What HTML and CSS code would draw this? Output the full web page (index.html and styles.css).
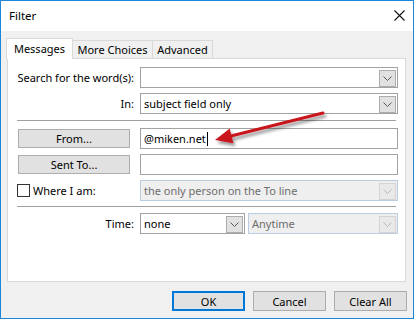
FILE: index.html
```html
<!DOCTYPE html>
<html lang="en">
<head>
  <meta charset="UTF-8" />
  <title>Filter</title>
  <link rel="stylesheet" href="styles.css">
</head>
<body>
  <div class="dialog">
    <div class="titlebar">
      <span class="title">Filter</span>
      <svg class="close" width="11" height="11" viewBox="0 0 11 11">
        <path d="M0.5 0.5 L10.5 10.5 M10.5 0.5 L0.5 10.5" stroke="#111" stroke-width="1.1" fill="none"/>
      </svg>
    </div>

    <div class="dialog-body">
      <div class="tabs">
        <div class="tab active tab-messages">Messages</div>
        <div class="tab tab-more">More Choices</div>
        <div class="tab tab-advanced">Advanced</div>
      </div>

      <div class="panel">
        <div class="row">
          <span class="label">Search for the word(s):</span>
          <div class="combo">
            <span class="combo-text"></span>
            <span class="drop"><svg width="9" height="5" viewBox="0 0 9 5"><path d="M0.5 0.5 L4.5 4.5 L8.5 0.5" stroke="#555" fill="none"/></svg></span>
          </div>
        </div>

        <div class="row row-gap">
          <span class="label">In:</span>
          <div class="combo">
            <span class="combo-text">subject field only</span>
            <span class="drop"><svg width="9" height="5" viewBox="0 0 9 5"><path d="M0.5 0.5 L4.5 4.5 L8.5 0.5" stroke="#555" fill="none"/></svg></span>
          </div>
        </div>

        <div class="separator sep-first"></div>

        <div class="row">
          <div class="label-cell"><button class="field-btn">From...</button></div>
          <div class="textbox"><span class="combo-text">@miken.net</span><span class="caret"></span></div>
        </div>

        <div class="row row-gap">
          <div class="label-cell"><button class="field-btn">Sent To...</button></div>
          <div class="textbox"></div>
        </div>

        <div class="row row-gap">
          <label class="check-label"><span class="checkbox"></span>Where I am:</label>
          <div class="combo disabled">
            <span class="combo-text">the only person on the To line</span>
            <span class="drop"><svg width="9" height="5" viewBox="0 0 9 5"><path d="M0.5 0.5 L4.5 4.5 L8.5 0.5" stroke="#bbb" fill="none"/></svg></span>
          </div>
        </div>

        <div class="separator sep-second"></div>

        <div class="row">
          <span class="label">Time:</span>
          <div class="time-fields">
            <div class="combo combo-none">
              <span class="combo-text">none</span>
              <span class="drop"><svg width="9" height="5" viewBox="0 0 9 5"><path d="M0.5 0.5 L4.5 4.5 L8.5 0.5" stroke="#555" fill="none"/></svg></span>
            </div>
            <div class="combo disabled combo-anytime">
              <span class="combo-text">Anytime</span>
              <span class="drop"><svg width="9" height="5" viewBox="0 0 9 5"><path d="M0.5 0.5 L4.5 4.5 L8.5 0.5" stroke="#bbb" fill="none"/></svg></span>
            </div>
          </div>
        </div>
      </div>

      <div class="actions">
        <button class="btn btn-default">OK</button>
        <button class="btn">Cancel</button>
        <button class="btn">Clear All</button>
      </div>
    </div>

    <!-- flecha roja de la captura -->
    <svg class="arrow" width="414" height="319" viewBox="0 0 414 319">
      <defs>
        <filter id="shadow" x="-20%" y="-50%" width="140%" height="200%">
          <feDropShadow dx="2" dy="3" stdDeviation="1.6" flood-color="#000" flood-opacity="0.4"/>
        </filter>
      </defs>
      <g filter="url(#shadow)">
        <line x1="323" y1="113" x2="229" y2="136.5" stroke="#c8161b" stroke-width="3" stroke-linecap="round"/>
        <polygon points="215,140 229.7,128.4 233.4,143.3" fill="#c8161b"/>
      </g>
    </svg>
  </div>
</body>
</html>
```

FILE: styles.css
```css
* {
  box-sizing: border-box;
  margin: 0;
  padding: 0;
}

body {
  background: #fff;
  font-family: "Noto Sans", "Open Sans", sans-serif;
  font-size: 11px;
  color: #000;
}

.dialog {
  position: relative;
  width: 414px;
  height: 319px;
  border: 1px solid #1d86d8;
  background: #f0f0f0;
  display: flex;
  flex-direction: column;
}

.titlebar {
  height: 30px;
  background: #fff;
  display: flex;
  align-items: center;
  justify-content: space-between;
  padding: 0 8px 0 8px;
}

.title {
  font-size: 11.5px;
  line-height: 30px;
}

.close {
  display: block;
  margin-top: -1px;
}

.dialog-body {
  flex: 1;
  padding: 7px 7px 0 6px;
}

/* pestañas */
.tabs {
  display: flex;
  align-items: flex-end;
  height: 21px;
  margin: 0 0 -1px -1px;
  position: relative;
  z-index: 1;
}

.tab {
  height: 19px;
  line-height: 18px;
  text-align: center;
  background: #f0f0f0;
  border-top: 1px solid #d9d9d9;
  border-right: 1px solid #d9d9d9;
  border-bottom: 1px solid #d9d9d9;
}

.tab.active {
  height: 21px;
  line-height: 19px;
  background: #fff;
  border-left: 1px solid #d9d9d9;
  border-bottom: none;
}

.tab-messages { width: 67px; }
.tab-more { width: 80px; }
.tab-advanced { width: 60px; }

.panel {
  height: 224px;
  background: #fff;
  border: 1px solid #d9d9d9;
  padding: 8px 7px 0 9px;
}

.row {
  display: grid;
  grid-template-columns: 117px 258px;
  column-gap: 6px;
  height: 21px;
  align-items: center;
}

.row-gap {
  margin-top: 5px;
}

.label {
  text-align: right;
  white-space: nowrap;
}

.label-cell {
  display: flex;
  padding-left: 1px;
}

.field-btn {
  width: 112px;
  height: 19px;
  font: inherit;
  color: #000;
  background: #e1e1e1;
  border: 1px solid #adadad;
  line-height: 16px;
}

.combo,
.textbox {
  height: 21px;
  border: 1px solid #a2a2a2;
  background: #fff;
  display: flex;
  align-items: center;
  justify-content: space-between;
}

.combo-text {
  padding-left: 3px;
  line-height: 19px;
  white-space: nowrap;
}

.textbox {
  justify-content: flex-start;
}

.caret {
  display: inline-block;
  width: 1px;
  height: 14px;
  background: #000;
  margin-left: 1px;
}

.drop {
  width: 17px;
  height: 17px;
  margin: 1px 1px 0 0;
  background: #e1e1e1;
  border: 1px solid #adadad;
  display: flex;
  align-items: center;
  justify-content: center;
}

.drop svg {
  display: block;
}

.combo.disabled {
  background: #efefef;
  border-color: #b9cde3;
}

.combo.disabled .combo-text {
  color: #6d6d6d;
}

.combo.disabled .drop {
  background: #e9e9e9;
  border-color: #d4d4d4;
}

.check-label {
  display: flex;
  align-items: center;
  gap: 3px;
  white-space: nowrap;
}

.checkbox {
  width: 13px;
  height: 13px;
  border: 1px solid #333;
  background: #fff;
}

.separator {
  height: 1px;
  background: #a0a0a0;
  margin-right: 2px;
}

.sep-first {
  margin-top: 6px;
  margin-bottom: 7px;
}

.sep-second {
  margin-top: 5px;
  margin-bottom: 6px;
}

.time-fields {
  display: flex;
  gap: 3px;
}

.combo-none { width: 105px; }
.combo-anytime { width: 150px; }

/* botones de abajo */
.actions {
  display: flex;
  justify-content: flex-end;
  gap: 8px;
  margin: 9px -1px 0 0;
}

.btn {
  width: 73px;
  height: 20px;
  font: inherit;
  color: #000;
  background: #e1e1e1;
  border: 1px solid #adadad;
}

.btn-default {
  border: 2px solid #0078d7;
}

.arrow {
  position: absolute;
  left: -1px;
  top: -1px;
  pointer-events: none;
}
```
